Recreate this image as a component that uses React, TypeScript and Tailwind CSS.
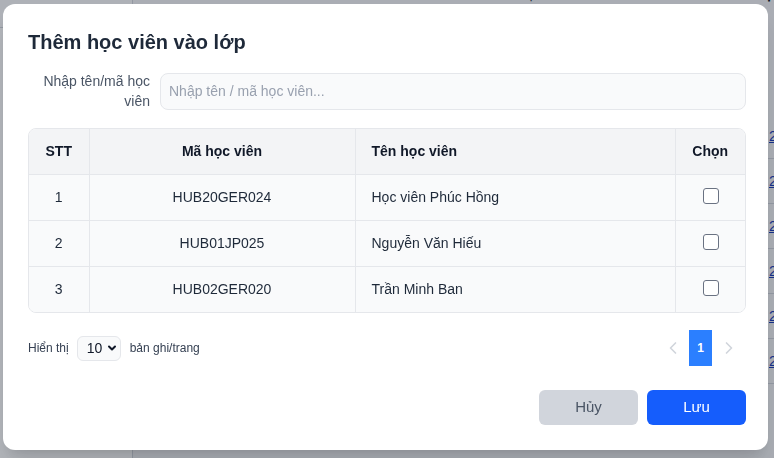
import React, { useState } from 'react';
import { ChevronLeft, ChevronRight, ChevronDown } from 'lucide-react';

const STUDENTS = [
  { id: 1, code: 'HUB20GER024', name: 'Học viên Phúc Hồng' },
  { id: 2, code: 'HUB01JP025', name: 'Nguyễn Văn Hiếu' },
  { id: 3, code: 'HUB02GER020', name: 'Trần Minh Ban' },
];

const BackgroundPage: React.FC = () => (
  <div className="flex h-screen bg-white">
    <div className="w-[133px] shrink-0 border-r border-gray-300 bg-white">
      <div className="h-[28px] border-b border-gray-300 bg-gray-50" />
    </div>
    <div className="flex-1 bg-gray-100">
      <div className="-mt-[12px] flex h-[16px] items-end text-sm">
        <span className="ml-[37px] font-bold text-gray-900">Sức chứa:</span>
        <span className="ml-[260px] text-gray-700">25 học viên</span>
        <span className="ml-[180px] font-bold text-gray-900">Trạng</span>
      </div>
      <div className="ml-[620px] mt-[110px] flex flex-col">
        {[0, 1, 2, 3, 4, 5].map(i => (
          <div key={i} className="h-[45px] border-b border-gray-300 pt-3 text-sm text-blue-800">
            <span className="ml-[16px] underline">2025</span>
          </div>
        ))}
      </div>
    </div>
  </div>
);

const App: React.FC = () => {
  const [checked, setChecked] = useState<Record<number, boolean>>({});

  return (
    <div className="relative h-screen overflow-hidden font-['Liberation_Sans',Arial,sans-serif]">
      <BackgroundPage />
      <div className="fixed inset-0 bg-[#111827]/[0.32] pl-[3px] pt-[4px]">
        <div className="w-[765px] rounded-xl bg-white pb-[25px] pl-[25px] pr-[22px] pt-[24px] shadow-xl">
          <h2 className="text-[20px] font-bold leading-7 text-gray-800">Thêm học viên vào lớp</h2>

          <div className="mt-[15px] flex h-[40px] items-center gap-[10px]">
            <label className="w-[122px] text-right text-sm leading-5 text-gray-600">Nhập tên/mã học viên</label>
            <input
              type="text"
              placeholder="Nhập tên / mã học viên..."
              className="h-[37px] flex-1 rounded-lg border border-gray-200 bg-gray-50 px-2 text-sm text-gray-800 placeholder:text-gray-400 focus:outline-none"
            />
          </div>

          <div className="mt-[17px] overflow-hidden rounded-lg border border-gray-200">
            <table className="w-full border-collapse text-sm">
              <thead>
                <tr className="h-[45px] bg-gray-100 text-gray-900">
                  <th className="w-[60px] border-r border-gray-200 font-bold">STT</th>
                  <th className="w-[266px] border-r border-gray-200 font-bold">Mã học viên</th>
                  <th className="border-r border-gray-200 px-4 text-left font-bold">Tên học viên</th>
                  <th className="w-[70px] font-bold">Chọn</th>
                </tr>
              </thead>
              <tbody className="bg-gray-50 text-gray-800">
                {STUDENTS.map(s => (
                  <tr key={s.id} className="h-[46px] border-t border-gray-200">
                    <td className="border-r border-gray-200 text-center">{s.id}</td>
                    <td className="border-r border-gray-200 text-center">{s.code}</td>
                    <td className="border-r border-gray-200 px-4">{s.name}</td>
                    <td className="text-center">
                      <input
                        type="checkbox"
                        checked={!!checked[s.id]}
                        onChange={() => setChecked(c => ({ ...c, [s.id]: !c[s.id] }))}
                        className="h-4 w-4 translate-x-[1px] translate-y-[1px] cursor-pointer appearance-none rounded-[3px] border border-gray-500 bg-white checked:border-blue-600 checked:bg-blue-600"
                      />
                    </td>
                  </tr>
                ))}
              </tbody>
            </table>
          </div>

          <div className="mt-[17px] flex h-[36px] items-center justify-between">
            <div className="flex items-center text-xs text-gray-700">
              <span>Hiển thị</span>
              <div className="ml-[8px] flex h-[25px] w-[44px] items-center gap-[4px] rounded-md border border-gray-200 bg-gray-50 pl-[9px] text-sm text-gray-900">
                <span>10</span>
                <ChevronDown className="h-3 w-3" strokeWidth={4} />
              </div>
              <span className="ml-[9px]">bản ghi/trang</span>
            </div>
            <div className="mr-[6px] flex items-center gap-[5px]">
              <button className="flex h-[36px] w-[23px] items-center justify-center text-gray-300">
                <ChevronLeft className="h-5 w-5" strokeWidth={2} />
              </button>
              <button className="h-[36px] w-[23px] bg-blue-500 text-xs font-bold text-white">1</button>
              <button className="flex h-[36px] w-[23px] items-center justify-center text-gray-300">
                <ChevronRight className="h-5 w-5" strokeWidth={2} />
              </button>
            </div>
          </div>

          <div className="mt-[24px] flex justify-end gap-[9px]">
            <button className="h-[35px] w-[99px] rounded-md bg-gray-300 text-[15px] text-gray-600">Hủy</button>
            <button className="h-[35px] w-[99px] rounded-md bg-blue-600 text-[15px] font-medium text-white">Lưu</button>
          </div>
        </div>
      </div>
    </div>
  );
};

export default App;
